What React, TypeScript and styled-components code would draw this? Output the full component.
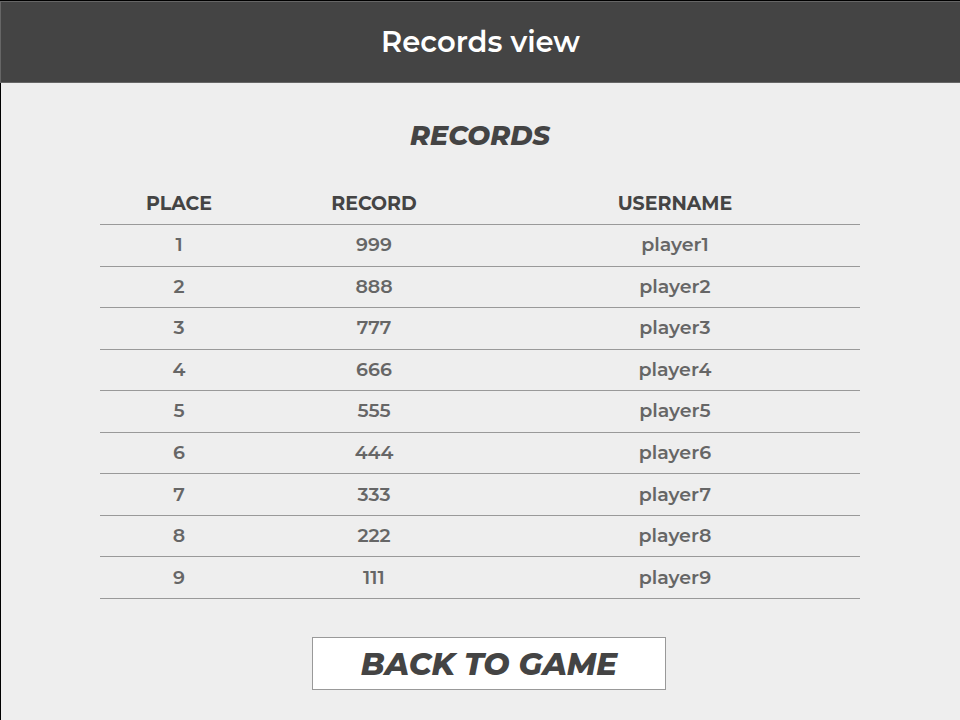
import React from "react";
import styled, { createGlobalStyle } from "styled-components";

const GlobalStyle = createGlobalStyle`
  * {
    box-sizing: border-box;
  }

  body {
    margin: 0;
    background: #eeeeee;
    color: #444444;
    font-family: Montserrat, Inter, "Open Sans", sans-serif;
  }
`;

const Page = styled.div`
  display: flex;
  flex-direction: column;
  min-height: 100vh;
  border-top: 1px solid #000000;
`;

const Header = styled.header`
  padding: 20px;
  border: 1px solid #666666;
  border-right: 0;
  background: #444444;
  color: #ffffff;
  text-align: center;
`;

const PageTitle = styled.h1`
  margin: 0;
  font-size: 29px;
  font-weight: 600;
  line-height: 40px;
`;

const Content = styled.main`
  flex: 1;
  display: flex;
  flex-direction: column;
  padding: 37px 100px 30px 99px;
  border-left: 1px solid #000000;
`;

const SectionTitle = styled.h2`
  margin: 0 0 30px;
  font-size: 27px;
  font-style: italic;
  font-weight: 800;
  line-height: 32px;
  text-align: center;
`;

const Table = styled.table`
  width: 100%;
  border-collapse: collapse;
  table-layout: fixed;
`;

const Row = styled.tr`
  border-bottom: 1px solid #999999;
`;

const TableBody = styled.tbody`
  height: 374px;
`;

const HeadCell = styled.th<{ $width: string }>`
  width: ${({ $width }) => $width};
  padding: 10px 0 8px;
  font-size: 19px;
  font-weight: 700;
  line-height: 24px;
  text-align: center;
`;

const Cell = styled.td`
  padding: 0;
  color: #666666;
  font-size: 19px;
  font-weight: 600;
  line-height: 24px;
  text-align: center;
`;

const Actions = styled.div`
  display: flex;
  justify-content: center;
  margin-top: 38px;
  padding-left: 18px;
`;

const BackButton = styled.button`
  padding: 6px 48px 5px;
  border: 1px solid #999999;
  background: #ffffff;
  color: #444444;
  font-family: inherit;
  font-size: 31px;
  font-style: italic;
  font-weight: 800;
  line-height: 40px;
  cursor: pointer;
`;

const columns = [
  { label: "PLACE", width: "20.8%" },
  { label: "RECORD", width: "30.5%" },
  { label: "USERNAME", width: "48.7%" },
];

const records = [999, 888, 777, 666, 555, 444, 333, 222, 111].map(
  (record, index) => ({
    place: index + 1,
    record,
    username: `player${index + 1}`,
  }),
);

export default function App() {
  return (
    <>
      <GlobalStyle />
      <Page>
        <Header>
          <PageTitle>Records view</PageTitle>
        </Header>
        <Content>
          <SectionTitle id="records-title">RECORDS</SectionTitle>
          <Table aria-labelledby="records-title">
            <thead>
              <Row>
                {columns.map(({ label, width }) => (
                  <HeadCell key={label} scope="col" $width={width}>
                    {label}
                  </HeadCell>
                ))}
              </Row>
            </thead>
            <TableBody>
              {records.map(({ place, record, username }) => (
                <Row key={place}>
                  <Cell>{place}</Cell>
                  <Cell>{record}</Cell>
                  <Cell>{username}</Cell>
                </Row>
              ))}
            </TableBody>
          </Table>
          <Actions>
            <BackButton type="button">BACK TO GAME</BackButton>
          </Actions>
        </Content>
      </Page>
    </>
  );
}
